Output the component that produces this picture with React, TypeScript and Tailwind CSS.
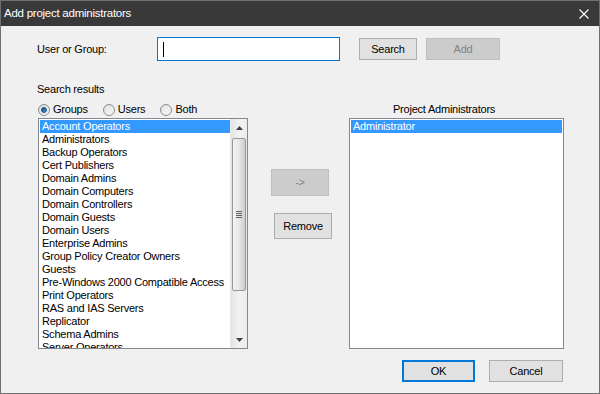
import React from "react";

const groups = [
  "Account Operators",
  "Administrators",
  "Backup Operators",
  "Cert Publishers",
  "Domain Admins",
  "Domain Computers",
  "Domain Controllers",
  "Domain Guests",
  "Domain Users",
  "Enterprise Admins",
  "Group Policy Creator Owners",
  "Guests",
  "Pre-Windows 2000 Compatible Access",
  "Print Operators",
  "RAS and IAS Servers",
  "Replicator",
  "Schema Admins",
  "Server Operators",
];

function Radio({ label, checked, gapAfter }: { label: string; checked?: boolean; gapAfter: string }) {
  return (
    <div className={`flex items-center h-[13px] ${gapAfter}`}>
      <div className="w-[12px] h-[12px] rounded-full border border-[#8e8f8f] bg-gradient-to-br from-[#d8d8d8] to-[#fbfbfb] flex items-center justify-center">
        {checked ? (
          <div className="w-[6px] h-[6px] rounded-full bg-gradient-to-br from-[#0b3f7c] to-[#4aa3f0] border border-[#1c4f8a]" />
        ) : (
          <div className="w-[8px] h-[8px] rounded-full bg-gradient-to-br from-[#e6e6e6] to-[#f4f4f4]" />
        )}
      </div>
      <span className="ml-[3px] leading-[13px]">{label}</span>
    </div>
  );
}

export default function App() {
  return (
    <div
      className="w-[600px] h-[394px] border border-[#707070] flex flex-col text-[11px] tracking-[-0.22px] text-black overflow-hidden"
      style={{ fontFamily: '"Liberation Sans", Arial, sans-serif' }}
    >
      {/* Title bar */}
      <div className="h-[25px] bg-[#393939] flex items-center justify-between shrink-0">
        <span className="pl-[3px] text-white text-[11.5px] tracking-[-0.25px] leading-[15px]">Add project administrators</span>
        <svg width="10" height="10" viewBox="0 0 10 10" className="mr-[10px]">
          <path d="M0.5 0.5 L9.5 9.5 M9.5 0.5 L0.5 9.5" stroke="#ffffff" strokeWidth="1.1" />
        </svg>
      </div>

      {/* Body */}
      <div className="flex-1 bg-[#f0f0f0] flex flex-col">
        {/* Row 1 */}
        <div className="mt-[11px] h-[24px] flex items-center">
          <span className="ml-[36px] w-[120px] leading-[13px]">User or Group:</span>
          <div className="w-[183px] h-[24px] bg-white border border-[#0078d7] flex items-center">
            <div className="ml-[5px] w-[1px] h-[15px] bg-black" />
          </div>
          <button className="ml-[19px] w-[58px] h-[22px] bg-[#e1e1e1] border border-[#adadad] leading-[13px]">
            Search
          </button>
          <button className="ml-[9px] w-[74px] h-[22px] bg-[#cccccc] border border-[#bfbfbf] text-[#838383] leading-[13px]">
            Add
          </button>
        </div>

        {/* Lower section */}
        <div className="flex items-start mt-[22px]">
          {/* Left column */}
          <div className="ml-[36px] w-[211px] flex flex-col">
            <span className="leading-[13px] h-[13px]">Search results</span>
            <div className="mt-[7px] flex items-center ml-[1px]">
              <Radio label="Groups" checked gapAfter="mr-[15px]" />
              <Radio label="Users" gapAfter="mr-[15px]" />
              <Radio label="Both" gapAfter="" />
            </div>
            <div className="mt-[2px] ml-[1px] w-[210px] h-[231px] bg-white border border-[#828790] flex overflow-hidden">
              <div className="flex-1 pl-[1px] pt-[1px] overflow-hidden">
                {groups.map((g, i) => (
                  <div
                    key={g}
                    className={`h-[13px] leading-[13px] pl-[2px] whitespace-nowrap ${
                      i === 0 ? "bg-[#3399ff] text-white" : ""
                    }`}
                  >
                    {g}
                  </div>
                ))}
              </div>
              {/* Scrollbar */}
              <div className="w-[17px] h-full bg-gradient-to-r from-[#e4e4e4] via-[#f2f2f2] to-[#ececec] border-l border-[#e9e9e9] flex flex-col items-center shrink-0">
                <div className="h-[17px] w-full flex items-center justify-center">
                  <svg width="7" height="4" viewBox="0 0 7 4">
                    <path d="M3.5 0 L7 4 L0 4 Z" fill="#404040" />
                  </svg>
                </div>
                <div className="mt-[2px] w-[14px] h-[153px] rounded-[2px] border border-[#979797] bg-gradient-to-r from-[#f4f4f4] via-[#e6e6e6] to-[#cdcdcd] flex flex-col items-center justify-center gap-[1px]">
                  <div className="w-[6px] h-[1px] bg-[#606060]" />
                  <div className="w-[6px] h-[1px] bg-[#606060]" />
                  <div className="w-[6px] h-[1px] bg-[#606060]" />
                  <div className="w-[6px] h-[1px] bg-[#606060]" />
                </div>
                <div className="flex-1" />
                <div className="h-[17px] w-full flex items-center justify-center">
                  <svg width="7" height="4" viewBox="0 0 7 4">
                    <path d="M0 0 L7 0 L3.5 4 Z" fill="#404040" />
                  </svg>
                </div>
              </div>
            </div>
          </div>

          {/* Middle column */}
          <div className="ml-[23px] w-[61px] flex flex-col items-start">
            <button className="mt-[86px] w-[58px] h-[27px] bg-[#cccccc] border border-[#bfbfbf] text-[#838383] leading-[13px]">
              -&gt;
            </button>
            <button className="mt-[17px] ml-[3px] w-[58px] h-[26px] bg-[#e1e1e1] border border-[#adadad] leading-[13px]">
              Remove
            </button>
          </div>

          {/* Right column */}
          <div className="ml-[17px] mt-[20px] w-[215px] flex flex-col">
            <span className="pl-[44px] leading-[13px] h-[13px]">Project Administrators</span>
            <div className="mt-[2px] w-[215px] h-[231px] bg-white border border-[#828790] pl-[1px] pt-[1px] pr-[1px]">
              <div className="h-[13px] leading-[13px] pl-[2px] bg-[#3399ff] text-white">Administrator</div>
            </div>
          </div>
        </div>

        {/* Bottom row */}
        <div className="mt-[11px] flex">
          <button className="ml-[401px] w-[73px] h-[22px] bg-[#e1e1e1] border-2 border-[#0078d7] leading-[13px]">
            OK
          </button>
          <button className="ml-[14px] w-[74px] h-[22px] bg-[#e1e1e1] border border-[#adadad] leading-[13px]">
            Cancel
          </button>
        </div>
      </div>
    </div>
  );
}
